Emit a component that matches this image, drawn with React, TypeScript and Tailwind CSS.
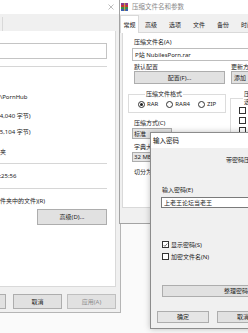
import React from 'react';

function Btn({ label, className = '' }: { label: string; className?: string }) {
  return (
    <div className={`flex shrink-0 items-center justify-center border border-[#adadad] bg-[#e1e1e1] ${className}`}>
      {label}
    </div>
  );
}

function Radio({ checked, label }: { checked?: boolean; label: string }) {
  return (
    <div className="flex items-center">
      <div className="flex h-[7px] w-[7px] items-center justify-center rounded-full border border-[#333] bg-white">
        {checked && <div className="h-[3px] w-[3px] rounded-full bg-[#222]" />}
      </div>
      <span className="ml-[2px]">{label}</span>
    </div>
  );
}

function Check({ checked, label }: { checked?: boolean; label?: string }) {
  return (
    <div className="flex h-[7px] items-center">
      <div className="flex h-[7px] w-[7px] shrink-0 items-center justify-center border border-[#333] bg-white">
        {checked && (
          <svg width="6" height="6" viewBox="0 0 6 6">
            <path d="M0.8 3.1 L2.3 4.6 L5.2 1.2" fill="none" stroke="#222" strokeWidth="0.8" />
          </svg>
        )}
      </div>
      {label && <span className="ml-[2px] whitespace-nowrap">{label}</span>}
    </div>
  );
}

function RarIcon() {
  return (
    <svg width="7" height="8" viewBox="0 0 7 8">
      <rect x="0" y="0" width="7" height="2" fill="#8b3a8f" />
      <rect x="0" y="2" width="7" height="2" fill="#c8323a" />
      <rect x="0" y="4" width="7" height="2" fill="#3a8f4a" />
      <rect x="0" y="6" width="7" height="2" fill="#3a5fb0" />
      <rect x="3" y="0" width="1.2" height="8" fill="#c9a24a" />
    </svg>
  );
}

function PropertiesWindow() {
  return (
    <div className="absolute left-0 top-0 flex h-[313px] w-[121px] flex-col border-r border-b border-[#b5b5b5] bg-[#f0f0f0]">
      <div className="flex h-[14px] items-center justify-end bg-white pr-[6px]">
        <svg width="6" height="6" viewBox="0 0 6 6">
          <path d="M0.5 0.5 L5.5 5.5 M5.5 0.5 L0.5 5.5" stroke="#a0a0a0" strokeWidth="0.7" />
        </svg>
      </div>
      <div className="flex h-[17px]">
        <div className="mt-[3px] h-[14px] w-[3px] border-r border-[#d9d9d9]" />
      </div>
      <div className="mr-[4px] flex h-[256px] flex-col overflow-hidden border-r border-b border-[#d9d9d9] bg-white">
        <div className="ml-[-1px] mt-[12px] h-[16px] w-[108px] border border-[#c4c4c4]" />
        <div className="mt-[7px] h-px w-[107px] bg-[#d6d6d6]" />
        <div className="mt-[26px] h-[8px] whitespace-nowrap leading-[8px]">\PornHub</div>
        <div className="ml-[-2px] mt-[11px] h-[8px] whitespace-nowrap leading-[8px]">(4,040 字节)</div>
        <div className="ml-[-2px] mt-[8px] h-[8px] whitespace-nowrap leading-[8px]">(5,104 字节)</div>
        <div className="ml-[-6px] mt-[12px] h-[8px] whitespace-nowrap leading-[8px]">件夹</div>
        <div className="mt-[7px] h-px w-[107px] bg-[#d6d6d6]" />
        <div className="ml-[-4px] mt-[8px] h-[8px] whitespace-nowrap leading-[8px]">4:25:56</div>
        <div className="mt-[8px] h-px w-[107px] bg-[#d6d6d6]" />
        <div className="mt-[8px] h-[8px] whitespace-nowrap leading-[8px]">件夹中的文件)(R)</div>
        <div className="mt-[4px] flex">
          <Btn label="高级(D)..." className="ml-[37px] h-[16px] w-[70px]" />
        </div>
      </div>
      <div className="flex pt-[7px]">
        <Btn label="确定" className="ml-[-43px] h-[15px] w-[49px]" />
        <Btn label="取消" className="ml-[7px] h-[15px] w-[49px]" />
        <Btn label="应用(A)" className="ml-[5px] h-[15px] w-[49px] border-[#bfbfbf] bg-[#d4d4d4] text-[#8d8d8d]" />
      </div>
    </div>
  );
}

function RarWindow() {
  const tabs = ['高级', '选项', '文件', '备份', '时间'];
  return (
    <div className="absolute left-[119px] top-0 flex h-[224px] w-[140px] flex-col overflow-hidden border-l border-b border-[#a3a3a3] bg-[#f0f0f0]">
      <div className="flex h-[14px] items-center bg-white pl-[1px]">
        <RarIcon />
        <span className="ml-[4px] whitespace-nowrap text-[6.5px] text-[#8a8a8a]">压缩文件名和参数</span>
      </div>
      <div className="flex h-[19px] items-end">
        <div className="flex h-[18px] w-[25px] items-center justify-center border border-b-0 border-[#d9d9d9] bg-white">常规</div>
        {tabs.map((t) => (
          <div key={t} className="flex h-[16px] w-[24px] shrink-0 items-center justify-center border-b border-[#d9d9d9]">
            {t}
          </div>
        ))}
      </div>
      <div className="ml-[2px] flex h-[175px] flex-col border-l border-b border-[#d9d9d9] bg-white">
        <div className="ml-[11px] mt-[5px] h-[8px] leading-[8px]">压缩文件名(A)</div>
        <div className="ml-[9px] mt-[2px] flex h-[13px] w-[130px] items-center border border-[#bdbdbd] pl-[2px] whitespace-nowrap">
          P站 NubilesPorn.rar
        </div>
        <div className="mt-[3px] flex">
          <div className="ml-[11px] flex w-[91px] flex-col">
            <div className="h-[7px] leading-[7px]">默认配置</div>
            <Btn label="配置(F)..." className="h-[13px] w-[91px]" />
          </div>
          <div className="ml-[6px] flex flex-col">
            <div className="h-[7px] whitespace-nowrap leading-[7px]">更新方式</div>
            <Btn label="添加" className="h-[13px] w-[40px] justify-start pl-[2px]" />
          </div>
        </div>
        <div className="mt-[6px] flex">
          <div className="ml-[5px] flex w-[98px] flex-col">
            <fieldset className="border border-[#dcdcdc] px-[9px] pb-[4px] pt-[2px]">
              <legend className="ml-[7px] px-[1px] leading-[8px]">压缩文件格式</legend>
              <div className="flex h-[8px] items-center gap-[8px]">
                <Radio checked label="RAR" />
                <Radio label="RAR4" />
                <Radio label="ZIP" />
              </div>
            </fieldset>
            <div className="ml-[6px] mt-[6px] h-[8px] leading-[8px]">压缩方式(C)</div>
            <div className="ml-[4px] mt-[1px] flex h-[11px] w-[40px] items-center border border-[#adadad] bg-[#e5e5e5] pl-[1px]">标准</div>
            <div className="ml-[6px] mt-[4px] h-[8px] leading-[8px]">字典大小(I)</div>
            <div className="ml-[4px] mt-[1px] flex h-[10px] w-[40px] items-center border border-[#adadad] bg-[#e5e5e5] pl-[1px]">32 MB</div>
            <div className="ml-[6px] mt-[6px] h-[8px] whitespace-nowrap leading-[8px]">切分为分卷(V)</div>
          </div>
          <div className="ml-[4px] flex w-[60px] flex-col">
            <fieldset className="flex flex-col gap-[3px] border border-[#dcdcdc] pb-[4px] pl-[8px] pt-[1px]">
              <legend className="ml-[4px] px-[1px] leading-[8px]">压缩选项</legend>
              <Check />
              <Check />
              <Check />
            </fieldset>
          </div>
        </div>
      </div>
    </div>
  );
}

function PasswordWindow() {
  return (
    <div className="absolute left-[150px] top-[132px] flex h-[197px] w-[110px] flex-col border border-[#8c8c8c] bg-[#f0f0f0] shadow-[0_0_6px_rgba(0,0,0,0.25)]">
      <div className="flex h-[15px] items-center bg-white pl-[2px] text-[6.5px] text-[#111]">输入密码</div>
      <div className="flex flex-col pl-[11px]">
        <div className="ml-[64px] mt-[8px] h-[8px] whitespace-nowrap leading-[8px]">带密码压缩</div>
        <div className="mt-[22px] h-[8px] leading-[8px]">输入密码(E)</div>
        <div className="ml-[-1px] mt-[3px] flex h-[11px] w-[100px] items-center border border-[#7a7a7a] bg-white pl-[2px]">
          上老王论坛当老王
        </div>
        <div className="mt-[33px]">
          <Check checked label="显示密码(S)" />
        </div>
        <div className="mt-[5px]">
          <Check label="加密文件名(N)" />
        </div>
        <div className="mt-[25px] flex h-[12px] w-[100px] items-center border border-[#adadad] bg-[#e1e1e1] pl-[61px] whitespace-nowrap">
          整理密码(O)...
        </div>
        <div className="ml-[-5px] mt-[14px] flex">
          <Btn label="确定" className="h-[12px] w-[52px] border-[#0078d7] bg-[#e5e5e5]" />
          <Btn label="取消" className="ml-[8px] h-[12px] w-[52px]" />
        </div>
      </div>
    </div>
  );
}

export default function App() {
  return (
    <div className="relative h-[333px] w-[248px] overflow-hidden bg-[#fafafa] font-['Noto_Sans','Noto_Sans_CJK_SC',sans-serif] text-[6px] leading-[8px] text-[#222]">
      <PropertiesWindow />
      <RarWindow />
      <PasswordWindow />
    </div>
  );
}
